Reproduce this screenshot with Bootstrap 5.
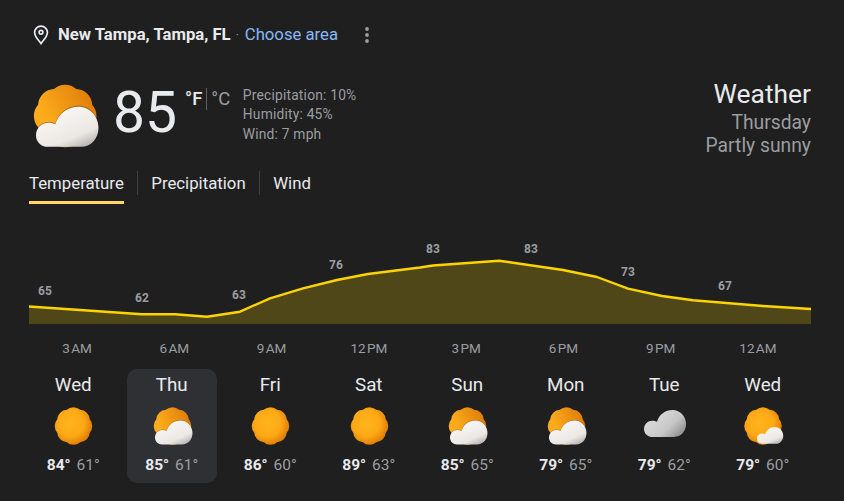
<!DOCTYPE html>
<html lang="en">
<head>
<meta charset="utf-8">
<title>Weather</title>
<link href="https://cdn.jsdelivr.net/npm/bootstrap@5.3.0/dist/css/bootstrap.min.css" rel="stylesheet">
<style>
body { background: #1f1f1f; color: #e8eaed; font-family: Roboto, "Liberation Sans", sans-serif; }
.wx-page { width: 844px; height: 501px; overflow: hidden; }
.wx-head { height: 36px; margin-top: 17px; padding-left: 33px; }
.wx-pin { width: 16px; height: 20px; margin-right: 9px; }
.wx-place { font-size: 16.7px; font-weight: 700; color: #e8eaed; }
.wx-sep { color: #9b9ea1; font-size: 12px; margin: 0 6px 0 5px; }
.wx-choose { font-size: 16.7px; color: #8ab8f8; text-decoration: none; }
.wx-dots { width: 6px; height: 18px; margin-left: 26px; }
.wx-now { height: 80px; margin-top: 23px; padding: 0 33px 0 26px; }
.wx-bigicon { width: 80px; height: 80px; }
.wx-deg { font-size: 57px; line-height: 74px; margin-left: 7px; color: #e8eaed; }
.wx-units { font-size: 18.5px; line-height: 23px; margin: 12px 0 0 8px; color: #9b9ea1; }
.wx-units b { font-weight: 500; color: #e8eaed; padding-right: 4px; border-right: 1px solid #5f6368; margin-right: 4px; }
.wx-info { font-size: 13.8px; line-height: 19.5px; color: #9b9ea1; margin: 9.5px 0 0 12.5px; letter-spacing: .2px; }
.wx-title { text-align: right; color: #9b9ea1; font-size: 19.3px; line-height: 24px; margin-top: 4px; }
.wx-title div:first-child { font-size: 26.4px; line-height: 28px; color: #e8eaed; margin-bottom: 3px; }
.wx-title div:nth-child(2) { line-height: 23px; }
.wx-tabs { height: 34px; margin-top: 14px; padding-left: 29px; }
.wx-tabs .nav-link { padding: 0; color: #e8eaed; font-size: 16.8px; line-height: 26px; height: 34px; }
.wx-tabs .nav-item + .nav-item { margin-left: 13.5px; padding-left: 14px; position: relative; }
.wx-tabs .nav-item + .nav-item::before { content: ""; position: absolute; left: 0; top: 1px; height: 24px; width: 1px; background: #3c4043; }
.wx-tabs .nav-link.active { border-bottom: 3px solid #fdd663; }
.wx-chart { width: 844px; height: 134px; }
.wx-chart text { font: 700 12px Roboto, "Liberation Sans", sans-serif; fill: #9b9ea1; text-anchor: middle; }
.wx-times { width: 778px; margin-left: 28.5px; height: 20px; font-size: 13.5px; line-height: 20px; color: #9b9ea1; word-spacing: -2px; }
.wx-days { width: 790px; margin: 11px 0 0 24px; }
.wx-day { height: 114px; width: 90px; margin: 0 4.25px; border-radius: 10px; padding-top: 5px; flex: none; }
.wx-day.wx-sel { background: #2f3034; }
.wx-name { font-size: 18.8px; line-height: 22px; color: #e8eaed; }
.wx-day svg { width: 48px; height: 48px; display: block; margin: 6px auto 0; position: relative; left: 1px; }
.wx-temps { font-size: 15.5px; line-height: 20px; margin-top: 5px; color: #9b9ea1; }
.wx-temps b { color: #e8eaed; font-weight: 700; margin-right: 2px; }
</style>
</head>
<body>
<svg class="position-absolute" width="0" height="0" aria-hidden="true">
  <defs>
    <radialGradient id="gSun" cx=".42" cy=".42" r=".6">
      <stop offset="0" stop-color="#ffb41e"/><stop offset=".6" stop-color="#fda915"/><stop offset="1" stop-color="#e07c06"/>
    </radialGradient>
    <linearGradient id="gSun2" x1=".15" y1=".45" x2=".85" y2=".1">
      <stop offset="0" stop-color="#fdac1c"/><stop offset="1" stop-color="#e07f0a"/>
    </linearGradient>
    <linearGradient id="gCloud" x1=".3" y1=".2" x2=".85" y2="1">
      <stop offset="0" stop-color="#f7f5f2"/><stop offset=".65" stop-color="#ebe8e4"/><stop offset="1" stop-color="#b0aeac"/>
    </linearGradient>
    <linearGradient id="gGrey" x1=".1" y1=".3" x2=".95" y2=".85">
      <stop offset="0" stop-color="#dcdcdc"/><stop offset=".6" stop-color="#c6c6c6"/><stop offset="1" stop-color="#8e8e8e"/>
    </linearGradient>
    <path id="pSun" d="M30.7 7.8A10 10 0 0 1 40.2 17.3A10 10 0 0 1 40.2 30.7A10 10 0 0 1 30.7 40.2A10 10 0 0 1 17.3 40.2A10 10 0 0 1 7.8 30.7A10 10 0 0 1 7.8 17.3A10 10 0 0 1 17.3 7.8A10 10 0 0 1 30.7 7.8Z"/>
    <path id="pCloud" d="M13 42.5C9 42.5 6 39.5 6 35.5C6 31 9.5 28 13.5 28C15 28 16.5 28.4 17.6 29C19.5 22.5 25 18.5 31.5 18.5C38.5 18.5 43.5 24.5 43.5 31C43.5 37.5 39 42.5 33 42.5Z"/>
    <symbol id="iSun" viewBox="0 0 48 48"><use href="#pSun" fill="url(#gSun)" transform="translate(-.5 0)"/></symbol>
    <symbol id="iPartly" viewBox="0 0 48 48">
      <use href="#pSun" fill="url(#gSun2)" transform="translate(-.5 0)"/>
      <use href="#pCloud" fill="#1a1a1a" opacity=".35" transform="translate(0 -.6)"/>
      <use href="#pCloud" fill="url(#gCloud)"/>
    </symbol>
    <symbol id="iMostly" viewBox="0 0 48 48">
      <use href="#pSun" fill="url(#gSun)" transform="translate(-1 0)"/>
      <use href="#pCloud" fill="url(#gCloud)" transform="translate(12.8 12) scale(.7)"/>
    </symbol>
    <symbol id="iCloud" viewBox="0 0 48 48">
      <use href="#pCloud" fill="url(#gGrey)" transform="translate(-3.7 -12.7) scale(1.12)"/>
    </symbol>
  </defs>
</svg>

<main class="wx-page d-flex flex-column">
  <header class="wx-head d-flex align-items-center">
    <svg class="wx-pin" viewBox="0 0 16 20" fill="none" stroke="#e8eaed" stroke-width="1.7"><path d="M8 1.2C4.3 1.2 1.6 4 1.6 7.4C1.6 11.6 6 15.6 8 18.6C10 15.6 14.4 11.6 14.4 7.4C14.4 4 11.7 1.2 8 1.2Z"/><circle cx="8" cy="7.2" r="1.9"/></svg>
    <span class="wx-place">New Tampa, Tampa, FL</span>
    <span class="wx-sep">·</span>
    <a class="wx-choose" href="#">Choose area</a>
    <svg class="wx-dots" viewBox="0 0 6 18" fill="#9b9ea1"><circle cx="3" cy="3" r="1.9"/><circle cx="3" cy="9" r="1.9"/><circle cx="3" cy="15" r="1.9"/></svg>
  </header>

  <section class="wx-now d-flex align-items-start">
    <svg class="wx-bigicon"><use href="#iPartly"/></svg>
    <div class="wx-deg">85</div>
    <div class="wx-units"><b>°F</b>°C</div>
    <div class="wx-info"><div>Precipitation: 10%</div><div>Humidity: 45%</div><div>Wind: 7 mph</div></div>
    <div class="wx-title ms-auto"><div>Weather</div><div>Thursday</div><div>Partly sunny</div></div>
  </section>

  <ul class="nav wx-tabs">
    <li class="nav-item"><a class="nav-link active" href="#">Temperature</a></li>
    <li class="nav-item"><a class="nav-link" href="#">Precipitation</a></li>
    <li class="nav-item"><a class="nav-link" href="#">Wind</a></li>
  </ul>

  <svg class="wx-chart d-block" viewBox="0 204 844 134">
    <path fill="#fdd400" fill-opacity=".22" d="M29 306.5L142 314.3L175 314.3L207 316.7L240 311.7L270 298.3L303 288.3L337 280L368 274L420 267.5L433 265.5L499 260.7L563 270L597 277L628 288.7L662 296L693 300.3L763 306L811 309V324H29Z"/>
    <path fill="none" stroke="#fdd400" stroke-width="2.4" stroke-linejoin="round" d="M29 306.5L142 314.3L175 314.3L207 316.7L240 311.7L270 298.3L303 288.3L337 280L368 274L420 267.5L433 265.5L499 260.7L563 270L597 277L628 288.7L662 296L693 300.3L763 306L811 309"/>
    <text x="45" y="295">65</text><text x="142" y="302">62</text><text x="239" y="299">63</text><text x="336" y="269">76</text>
    <text x="433" y="253">83</text><text x="531" y="253">83</text><text x="628" y="276">73</text><text x="725" y="290">67</text>
  </svg>

  <div class="wx-times d-flex text-center">
    <div class="flex-fill w-100">3 AM</div><div class="flex-fill w-100">6 AM</div><div class="flex-fill w-100">9 AM</div><div class="flex-fill w-100">12 PM</div>
    <div class="flex-fill w-100">3 PM</div><div class="flex-fill w-100">6 PM</div><div class="flex-fill w-100">9 PM</div><div class="flex-fill w-100">12 AM</div>
  </div>

  <div class="wx-days d-flex text-center">
    <div class="wx-day"><div class="wx-name">Wed</div><svg><use href="#iSun"/></svg><div class="wx-temps"><b>84°</b> 61°</div></div>
    <div class="wx-day wx-sel"><div class="wx-name">Thu</div><svg><use href="#iPartly"/></svg><div class="wx-temps"><b>85°</b> 61°</div></div>
    <div class="wx-day"><div class="wx-name">Fri</div><svg><use href="#iSun"/></svg><div class="wx-temps"><b>86°</b> 60°</div></div>
    <div class="wx-day"><div class="wx-name">Sat</div><svg><use href="#iSun"/></svg><div class="wx-temps"><b>89°</b> 63°</div></div>
    <div class="wx-day"><div class="wx-name">Sun</div><svg><use href="#iPartly"/></svg><div class="wx-temps"><b>85°</b> 65°</div></div>
    <div class="wx-day"><div class="wx-name">Mon</div><svg><use href="#iPartly"/></svg><div class="wx-temps"><b>79°</b> 65°</div></div>
    <div class="wx-day"><div class="wx-name">Tue</div><svg><use href="#iCloud"/></svg><div class="wx-temps"><b>79°</b> 62°</div></div>
    <div class="wx-day"><div class="wx-name">Wed</div><svg><use href="#iMostly"/></svg><div class="wx-temps"><b>79°</b> 60°</div></div>
  </div>
</main>
<script src="https://cdn.jsdelivr.net/npm/bootstrap@5.3.0/dist/js/bootstrap.bundle.min.js"></script>
</body>
</html>
